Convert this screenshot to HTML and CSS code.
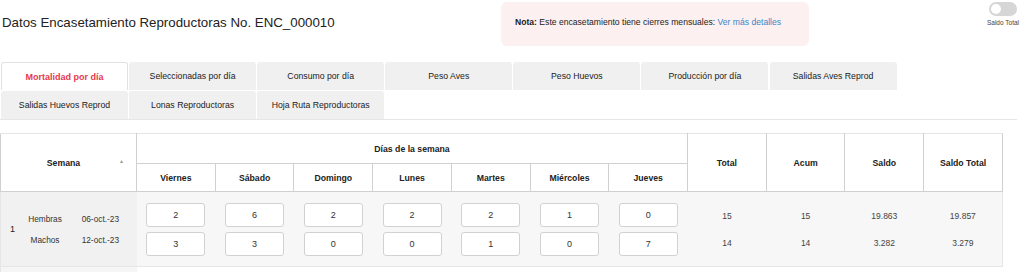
FILE: index.html
```html
<!DOCTYPE html>
<html lang="es">
<head>
<meta charset="utf-8">
<title>Datos Encasetamiento</title>
<link rel="stylesheet" href="styles.css">
</head>
<body>
<header class="top">
  <h1 class="title">Datos Encasetamiento Reproductoras No. ENC_000010</h1>
  <div class="note"><b>Nota:</b> Este encasetamiento tiene cierres mensuales: <a class="note-link" href="#">Ver más detalles</a></div>
  <div class="switch-wrap">
    <span class="switch"><span class="knob"></span></span>
    <span class="switch-label">Saldo Total</span>
  </div>
</header>

<nav class="tabs">
  <div class="tab active">Mortalidad por día</div>
  <div class="tab">Seleccionadas por día</div>
  <div class="tab">Consumo por día</div>
  <div class="tab">Peso Aves</div>
  <div class="tab">Peso Huevos</div>
  <div class="tab">Producción por día</div>
  <div class="tab">Salidas Aves Reprod</div>
  <div class="tab">Salidas Huevos Reprod</div>
  <div class="tab">Lonas Reproductoras</div>
  <div class="tab">Hoja Ruta Reproductoras</div>
</nav>

<table class="grid">
  <colgroup>
    <col class="c-sem">
    <col><col><col><col><col><col><col>
    <col><col><col><col>
  </colgroup>
  <thead>
    <tr class="h1">
      <th rowspan="2" class="sem">Semana<span class="sort">▲</span></th>
      <th colspan="7" class="days">Días de la semana</th>
      <th rowspan="2">Total</th>
      <th rowspan="2">Acum</th>
      <th rowspan="2">Saldo</th>
      <th rowspan="2">Saldo Total</th>
    </tr>
    <tr class="h2">
      <th>Viernes</th><th>Sábado</th><th>Domingo</th><th>Lunes</th><th>Martes</th><th>Miércoles</th><th>Jueves</th>
    </tr>
  </thead>
  <tbody>
    <tr class="row">
      <td class="first">
        <div class="wk">
          <span class="num">1</span>
          <div class="sub">
            <span class="sx">Hembras</span><span class="dt">06-oct.-23</span>
            <span class="sx">Machos</span><span class="dt">12-oct.-23</span>
          </div>
        </div>
      </td>
      <td><div class="pair"><input class="inp" value="2"><input class="inp" value="3"></div></td>
      <td><div class="pair"><input class="inp" value="6"><input class="inp" value="3"></div></td>
      <td><div class="pair"><input class="inp" value="2"><input class="inp" value="0"></div></td>
      <td><div class="pair"><input class="inp" value="2"><input class="inp" value="0"></div></td>
      <td><div class="pair"><input class="inp" value="2"><input class="inp" value="1"></div></td>
      <td><div class="pair"><input class="inp" value="1"><input class="inp" value="0"></div></td>
      <td><div class="pair"><input class="inp" value="0"><input class="inp" value="7"></div></td>
      <td><div class="vals"><span>15</span><span>14</span></div></td>
      <td><div class="vals"><span>15</span><span>14</span></div></td>
      <td><div class="vals"><span>19.863</span><span>3.282</span></div></td>
      <td><div class="vals"><span>19.857</span><span>3.279</span></div></td>
    </tr>
    <tr class="row2">
      <td class="first"></td>
      <td></td><td></td><td></td><td></td><td></td><td></td><td></td><td></td><td></td><td></td><td></td>
    </tr>
  </tbody>
</table>
</body>
</html>
```

FILE: styles.css
```css
* { box-sizing: border-box; }
html, body { margin: 0; padding: 0; background: #fff; }
body {
  font-family: "Liberation Sans", Arial, sans-serif;
  color: #222;
  overflow: hidden;
}

.top {
  display: flex;
  align-items: flex-start;
  height: 46px;
  padding-top: 2px;
}
.title {
  margin: 0;
  padding-left: 2px;
  font-size: 13.3px;
  font-weight: normal;
  line-height: 41px;
  width: 499px;
  color: #222;
}
.note {
  width: 308px;
  height: 44px;
  margin-left: 2px;
  background: #fdf0f0;
  border-radius: 6px;
  font-size: 8.6px;
  line-height: 41px;
  padding-left: 14px;
  color: #222;
}
.note b { font-weight: bold; }
.note-link { color: #3b86c8; text-decoration: none; }

.switch-wrap {
  margin-left: auto;
  margin-right: 2px;
  display: flex;
  flex-direction: column;
  align-items: center;
  width: 38px;
}
.switch {
  width: 28px;
  height: 14px;
  border-radius: 7px;
  background: #d6d6d6;
  display: flex;
  align-items: center;
  padding-left: 2px;
}
.knob {
  width: 10px;
  height: 10px;
  border-radius: 50%;
  background: #fff;
}
.switch-label {
  font-size: 6.5px;
  color: #444;
  margin-top: 3px;
  white-space: nowrap;
}

.tabs {
  margin-top: 16px;
  width: 1017px;
  padding-left: 1px;
  display: grid;
  grid-template-columns: repeat(7, 127px);
  grid-auto-rows: 28px;
  column-gap: 1.1px;
  row-gap: 1px;
  border-bottom: 1px solid #e6e6e6;
}
.tab {
  background: #f0f0f0;
  border-radius: 3px 3px 0 0;
  font-size: 8.7px;
  color: #222;
  display: flex;
  align-items: center;
  justify-content: center;
  white-space: nowrap;
}
.tab.active {
  background: #fff;
  border: 1px solid #e2e2e2;
  border-bottom: none;
  color: #e63950;
  font-weight: bold;
  font-size: 9px;
}

.grid {
  margin-top: 13px;
  width: 1003px;
  border-collapse: collapse;
  table-layout: fixed;
  font-size: 8px;
}
.c-sem { width: 136px; }
.grid th {
  font-weight: bold;
  font-size: 8.7px;
  color: #222;
  background: #fff;
  border: 1px solid #d0d0d0;
  text-align: center;
  padding: 0;
}
.grid thead tr.h1 th { border-top-color: #e6e6e6; }
.grid thead tr.h1 { height: 30px; }
.grid thead tr.h2 { height: 28px; }
.grid th.sem { position: relative; padding-right: 10px; }
.sort {
  position: absolute;
  right: 12px;
  top: 50%;
  margin-top: -5px;
  font-size: 5px;
  color: #999;
}

.grid td {
  padding: 0;
  border-bottom: 1px solid #e6e6e6;
  background: #f7f7f7;
  text-align: center;
  vertical-align: middle;
  color: #333;
}
.grid td.first { background: #f1f1f1; border-left: 1px solid #e6e6e6; }
.grid tr.row { height: 75px; }
.grid tr.row td:last-child { border-right: 1px solid #e6e6e6; }
.grid tr.row2 { height: 6px; }
.grid tr.row2 td { background: #fff; border-bottom: none; }
.grid tr.row2 td.first { background: #f5f5f5; }

.wk {
  display: flex;
  align-items: center;
  padding-left: 9px;
}
.num { width: 15px; text-align: left; font-size: 9px; color: #222; }
.sub {
  display: grid;
  grid-template-columns: 40px 54px;
  grid-auto-rows: 21px;
  align-items: center;
  font-size: 8.3px;
}
.sx { text-align: center; color: #333; }
.dt { text-align: right; color: #333; }

.pair {
  display: flex;
  flex-direction: column;
  align-items: center;
  gap: 5px;
}
.inp {
  width: 59px;
  height: 24px;
  border: 1px solid #d2d2d2;
  border-radius: 3px;
  background: #fff;
  text-align: center;
  font-family: "Liberation Sans", Arial, sans-serif;
  font-size: 9px;
  color: #333;
  padding: 0;
  margin: 0;
}
.vals {
  display: flex;
  flex-direction: column;
  align-items: center;
  gap: 17px;
  font-size: 8.5px;
  color: #444;
}
```
